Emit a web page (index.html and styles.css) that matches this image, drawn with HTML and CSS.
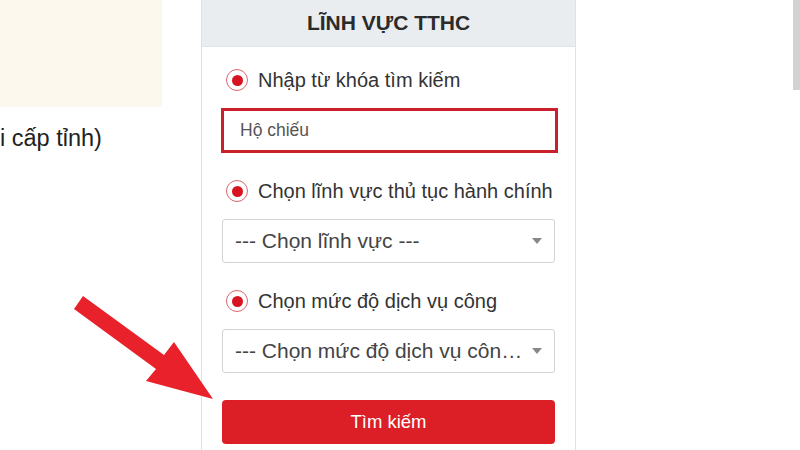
FILE: index.html
```html
<!DOCTYPE html>
<html lang="vi">
<head>
  <meta charset="UTF-8">
  <meta name="viewport" content="width=device-width, initial-scale=1.0">
  <title>Lĩnh vực TTHC</title>
  <link rel="stylesheet" href="styles.css">
</head>
<body>

  <div class="page">
    <!-- Left column (cropped content) -->
    <div class="left-col">
      <div class="note-box"></div>
      <div class="left-text">i cấp tỉnh)</div>
    </div>

    <!-- Search panel -->
    <div class="panel">
      <div class="panel-head">LĨNH VỰC TTHC</div>
      <div class="panel-body">
        <div class="group">
          <label class="radio-row"><span class="radio"></span>Nhập từ khóa tìm kiếm</label>
          <input type="text" class="keyword" value="Hộ chiếu">
        </div>
        <div class="group">
          <label class="radio-row"><span class="radio"></span>Chọn lĩnh vực thủ tục hành chính</label>
          <div class="select"><span class="select-text">--- Chọn lĩnh vực ---</span><span class="caret"></span></div>
        </div>
        <div class="group">
          <label class="radio-row"><span class="radio"></span>Chọn mức độ dịch vụ công</label>
          <div class="select"><span class="select-text">--- Chọn mức độ dịch vụ côn…</span><span class="caret"></span></div>
        </div>
        <button class="btn-search">Tìm kiếm</button>
      </div>
    </div>

    <div class="scrollbar"></div>
  </div>

  <!-- Annotation arrow -->
  <svg class="pointer" width="800" height="450" viewBox="0 0 800 450">
    <polygon points="83,296 164,355 174,342 213,399 146,381 156,369 74,309" fill="#e8212b"/>
  </svg>

</body>
</html>
```

FILE: styles.css
```css
body {
  margin: 0;
  font-family: "Liberation Sans", Arial, sans-serif;
  background: #fff;
  overflow: hidden;
}

.page {
  display: flex;
  height: 450px;
  position: relative;
}

/* Left column */
.left-col {
  width: 201px;
  flex-shrink: 0;
}

.note-box {
  width: 162px;
  height: 107px;
  background-color: #fdf8ee;
}

.left-text {
  margin-top: 18px;
  font-size: 23.5px;
  color: #222;
}

/* Panel */
.panel {
  width: 373px;
  flex-shrink: 0;
  border-left: 1px solid #dfe2e5;
  border-right: 1px solid #dfe2e5;
}

.panel-head {
  height: 47px;
  background-color: #e9edf0;
  border-bottom: 1px solid #e1e4e7;
  box-sizing: border-box;
  display: flex;
  align-items: center;
  justify-content: center;
  font-size: 21px;
  font-weight: bold;
  color: #2b2b2b;
}

.panel-body {
  padding: 22px 0 0 19px;
  display: flex;
  flex-direction: column;
  gap: 27px;
}

.group {
  display: flex;
  flex-direction: column;
  gap: 17px;
}

.radio-row {
  display: flex;
  align-items: center;
  height: 22px;
  font-size: 20px;
  color: #333;
  padding-left: 5px;
}

.radio {
  width: 20px;
  height: 20px;
  border: 1.5px solid #d9676d;
  border-radius: 50%;
  margin-right: 10px;
  display: flex;
  align-items: center;
  justify-content: center;
}

.radio::after {
  content: "";
  width: 11px;
  height: 11px;
  border-radius: 50%;
  background-color: #d7141f;
}

.keyword {
  width: 337px;
  height: 45px;
  box-sizing: border-box;
  border: 3px solid #c9202c;
  padding: 0 16px;
  font-family: inherit;
  font-size: 17.5px;
  color: #555;
  outline: none;
}

.select {
  width: 333px;
  height: 44px;
  box-sizing: border-box;
  margin-left: 1px;
  border: 1px solid #d3d3d3;
  border-radius: 3px;
  display: flex;
  align-items: center;
  padding: 0 12px;
  font-size: 21px;
  color: #444;
}

.select-text {
  flex: 1;
  white-space: nowrap;
}

.caret {
  width: 0;
  height: 0;
  border-left: 5px solid transparent;
  border-right: 5px solid transparent;
  border-top: 6px solid #888;
}

.btn-search {
  width: 333px;
  height: 44px;
  margin-left: 1px;
  border: none;
  border-radius: 4px;
  background-color: #dc1f27;
  color: #fff;
  font-family: inherit;
  font-size: 18.5px;
}

.scrollbar {
  position: absolute;
  right: 0;
  top: 0;
  width: 7px;
  height: 90px;
  background-color: #d2d2d2;
}

.pointer {
  position: absolute;
  left: 0;
  top: 0;
  pointer-events: none;
}
```
